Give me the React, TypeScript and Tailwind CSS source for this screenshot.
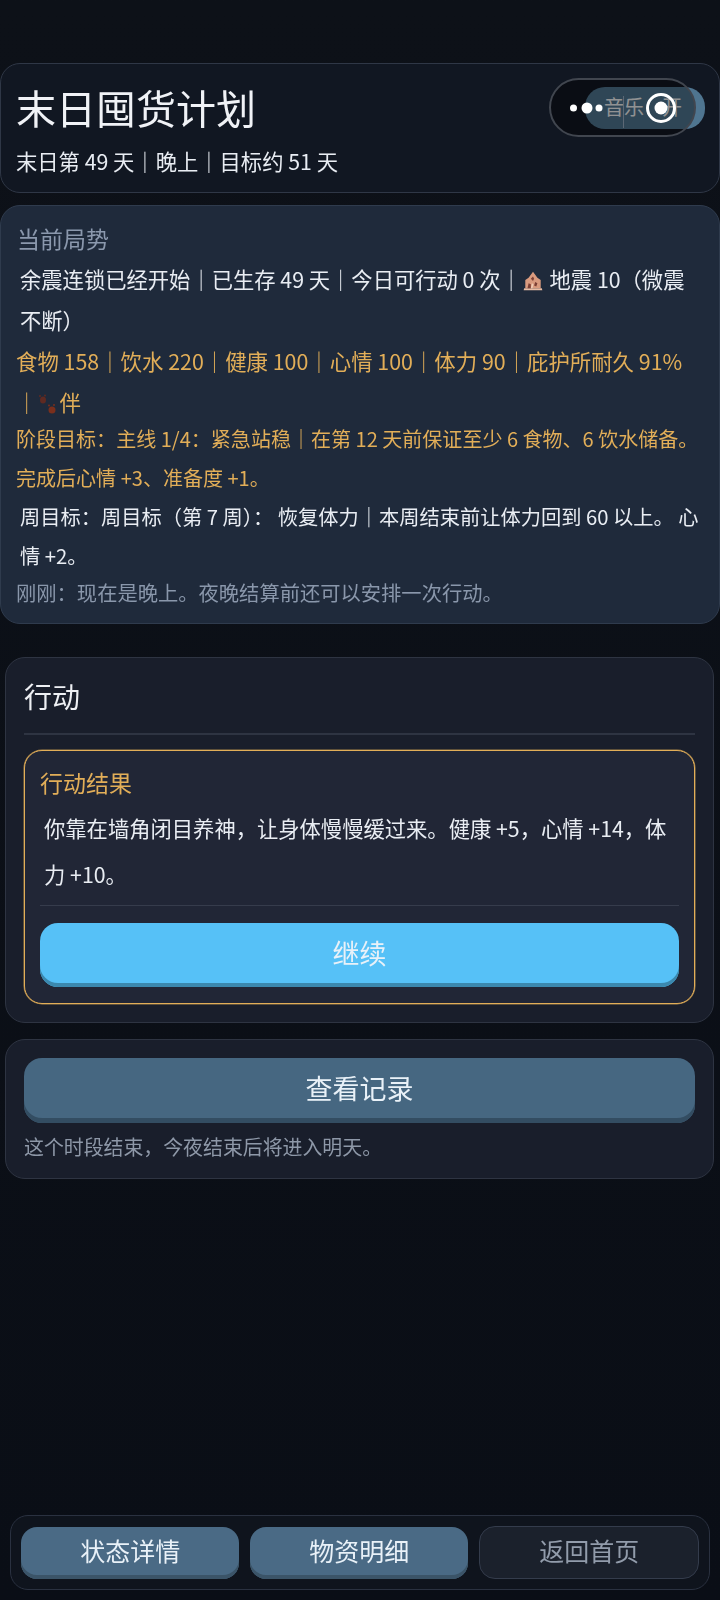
const House = () => (
  <svg width="22" height="22" viewBox="0 0 20 20" className="ml-[0px] mr-[1px] inline-block align-[-4px]">
    <path d="M1.500 18.500h17l-.5-2H2z" fill="#e8bda5" />
    <path d="M3 16.500V9l3-2 4-5.500L14 7l3 2v7.500z" fill="#d99a7e" />
    <path d="M8 8l2-2 1 2-1 2zM12 11l2 1-1 3-2-1zM6 12l2 1v3.500H5z" fill="#7b3f34" />
    <path d="M9 12l1.500 1-1 3.500H8z" fill="#f0cdb6" />
  </svg>
);

const Paw = () => (
  <svg width="22" height="22" viewBox="0 0 22 22" className="inline-block align-[-4px]">
    <ellipse cx="6" cy="7" rx="3" ry="3.500" fill="#5f2a22" />
    <circle cx="3" cy="3" r="1" fill="#5f2a22" />
    <circle cx="8" cy="2.500" r="1" fill="#5f2a22" />
    <ellipse cx="15" cy="17" rx="3.500" ry="3.500" fill="#7a2f1c" />
    <circle cx="12" cy="12.500" r="1" fill="#7a2f1c" />
    <circle cx="17" cy="12" r="1" fill="#7a2f1c" />
  </svg>
);

const ShadowButton = ({ label, className }: { label: string; className: string }) => (
  <div className={`flex items-center justify-center text-[#e9f1f8] will-change-transform ${className}`}>{label}</div>
);

export default function App() {
  return (
    <div className="relative flex h-[1600px] w-[720px] flex-col overflow-hidden bg-gradient-to-b from-[#0d1118] to-[#0a0e16] pt-[63px] font-['Noto_Sans_CJK_SC','Noto_Sans',sans-serif] text-[#e9edf3]">
      <header className="flex h-[130px] items-start justify-between rounded-[20px] border border-[#2f3746] bg-[#111722] pl-[15px] pr-[14px] pt-[14px]">
        <div className="will-change-transform">
          <h1 className="text-[40px] font-normal leading-[58px] text-[#f0f2f6]">末日囤货计划</h1>
          <p className="mt-[9px] text-[21.300px] leading-[32px]">末日第 49 天｜晚上｜目标约 51 天</p>
        </div>
        <div className="mt-[9px] flex h-[42px] w-[120px] gap-[18px] overflow-hidden rounded-[20px] bg-[#4f7590] pl-[19px] text-[20px] leading-[40px] text-[#f2f4f6]">
          <span>音乐</span>
          <span>开</span>
        </div>
      </header>

      <section className="mt-[12px] h-[419px] whitespace-nowrap rounded-[20px] border border-[#2f3b4d] bg-[#1f2a3b] pl-[15px] pr-[15px] pt-[15px]">
        <div className="will-change-transform">
          <h2 className="pl-[1px] text-[23px] font-normal leading-[34px] text-[#8b98ad]">当前局势</h2>
          <p className="mt-[3px] pl-[4px] text-[21.300px] leading-[41px]">
            余震连锁已经开始｜已生存 49 天｜今日可行动 0 次｜<House /> 地震 10（微震
            <br />
            不断）
          </p>
          <p className="text-[21.400px] leading-[41px] text-[#e2ae58]">
            食物 158｜饮水 220｜健康 100｜心情 100｜体力 90｜庇护所耐久 91%
            <br />｜<Paw />伴
          </p>
          <p className="mt-[-3px] text-[20.050px] leading-[39px] text-[#e2ae58]">
            阶段目标：主线 1/4：紧急站稳｜在第 12 天前保证至少 6 食物、6 饮水储备。
            <br />
            完成后心情 +3、准备度 +1。
          </p>
          <p className="pl-[4px] text-[20.250px] leading-[39px]">
            周目标：周目标（第 7 周）： 恢复体力｜本周结束前让体力回到 60 以上。 心
            <br />
            情 +2。
          </p>
          <p className="mt-[-2px] text-[20.300px] leading-[39px] text-[#8a97ab]">刚刚：现在是晚上。夜晚结算前还可以安排一次行动。</p>
        </div>
      </section>

      <section className="ml-[5px] mt-[33px] h-[366px] w-[709px] rounded-[20px] border border-[#2e3442] bg-[#191e2b] px-[18px] pt-[18px]">
        <h2 className="border-b-2 border-[#2e3442] pb-[17px] text-[28px] font-normal leading-[40px] text-[#eef0f4] will-change-transform">行动</h2>
        <div className="mt-[15px] h-[254px] rounded-[18px] border border-[#e2ae58] bg-[#212636] px-[15px] pt-[14px] shadow-[0_0_0_0.5px_#a5834b]">
          <h3 className="text-[23px] font-normal leading-[34px] text-[#e2ae58] will-change-transform">行动结果</h3>
          <p className="mt-[6px] border-b border-[#363c4c] pb-[8px] pl-[4px] text-[21.300px] leading-[46px] will-change-transform">
            你靠在墙角闭目养神，让身体慢慢缓过来。健康 +5，心情 +14，体力 +10。
          </p>
          <ShadowButton
            label="继续"
            className="mt-[17px] h-[64px] rounded-[18px] bg-[#56c1f7] pb-[3px] text-[27px] shadow-[inset_0_-4px_0_#3b88ae]"
          />
        </div>
      </section>

      <section className="ml-[5px] mt-[16px] h-[140px] w-[709px] rounded-[20px] border border-[#2e3442] bg-[#191e2b] px-[18px] pt-[18px]">
        <ShadowButton
          label="查看记录"
          className="h-[65px] rounded-[18px] bg-[#466781] pb-[4px] text-[27px] shadow-[inset_0_-5px_0_#334d62]"
        />
        <p className="mt-[9px] text-[19.900px] leading-[30px] text-[#8e98a8] will-change-transform">这个时段结束，今夜结束后将进入明天。</p>
      </section>

      <div className="flex-1" />

      <footer className="mx-[10px] mb-[10px] flex h-[75px] items-center gap-[10.500px] rounded-[18px] border border-[#2a3140] bg-[#0f141d] pl-[10px] pr-[10px]">
        <ShadowButton label="状态详情" className="h-[52px] flex-1 rounded-[16px] bg-[#4a6a85] pb-[4px] text-[25px] shadow-[inset_0_-4px_0_#3b5468]" />
        <ShadowButton label="物资明细" className="h-[52px] flex-1 rounded-[16px] bg-[#4a6a85] pb-[4px] text-[25px] shadow-[inset_0_-4px_0_#3b5468]" />
        <div className="flex h-[53px] flex-1 items-center justify-center rounded-[16px] border border-[#343c4c] bg-[#1b212c] pb-[4px] text-[25px] text-[#929cab] will-change-transform">返回首页</div>
      </footer>

      <div className="absolute left-[549px] top-[78px] flex h-[59px] w-[147px] items-center rounded-full border-2 border-[#41464f] bg-black/40 pl-[19px]">
        <svg width="112" height="40" viewBox="0 0 112 40">
          <circle cx="3.500" cy="20" r="3.500" fill="#fff" />
          <circle cx="17" cy="20" r="5.500" fill="#fff" />
          <circle cx="29" cy="20" r="3.500" fill="#fff" />
          <line x1="53.500" y1="8" x2="53.500" y2="46" stroke="#5c6875" strokeWidth="1" />
          <circle cx="91" cy="20" r="13.500" fill="none" stroke="#fff" strokeWidth="3" />
          <circle cx="91" cy="20" r="6.500" fill="#fff" />
        </svg>
      </div>
    </div>
  );
}
